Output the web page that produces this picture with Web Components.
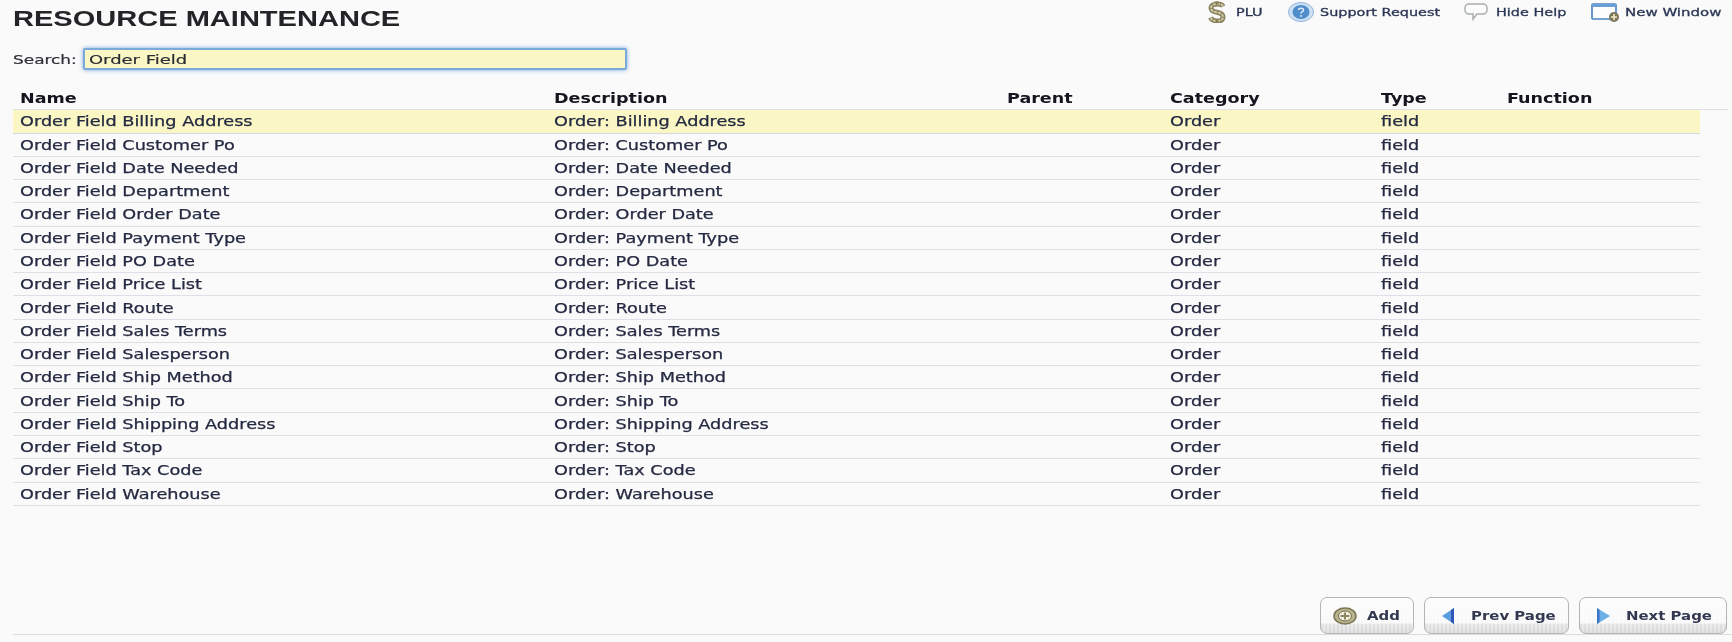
<!DOCTYPE html>
<html><head><meta charset="utf-8"><style>
html,body{margin:0;padding:0;background:#fafafa;}
body{width:1732px;height:642px;overflow:hidden;font-family:"DejaVu Sans",sans-serif;color:#2a2a3a;}
</style></head><body>
<rm-page></rm-page>
<script>
const S='M15 5.500C14 3 11.500 3 9 3S3 4 3 7s3 3.800 6 4.300 6 1.700 6 4.700-3 4-6 4-5.500-1-6.500-3.500';
const ICONS={
dollar:`<svg width="18" height="22" viewBox="0 0 18 22"><path d="${S}" fill="none" stroke="#8a8260" stroke-width="5"/><path d="${S}" fill="none" stroke="#cfc9a4" stroke-width="2" stroke-dasharray="3 1"/><path d="M9 .5v3M9 19v3" stroke="#857c58" stroke-width="3"/></svg>`,
help:`<svg width="26" height="22" viewBox="0 0 26 22"><ellipse cx="13" cy="11" rx="12.500" ry="9.500" fill="#cfe0f2" stroke="#8fb4dc"/><ellipse cx="13" cy="11" rx="8.500" ry="7" fill="#4f8dcb"/><path d="M10.500 9c0-2 5-2.500 5 0 0 1.800-2.500 1.500-2.500 3.500" fill="none" stroke="#dcebf8" stroke-width="1.600"/><circle cx="13" cy="15" r="1" fill="#dcebf8"/></svg>`,
bubble:`<svg width="24" height="20" viewBox="0 0 24 20"><path d="M5 2h14c2 0 4 1.500 4 4v2c0 2.500-2 4-4 4h-6l-4 5v-5H5c-2 0-4-1.500-4-4V6c0-2.500 2-4 4-4z" fill="#fcfcfc" stroke="#a8adb0" stroke-width="1.500"/></svg>`,
win:`<svg width="29" height="20" viewBox="0 0 29 20"><rect x="1" y="2" width="24" height="15" rx="1" fill="#fdfdfd" stroke="#4d86c4" stroke-width="1.700"/><rect x="1" y="2" width="24" height="3" fill="#6b9fd6"/><circle cx="23" cy="15" r="5" fill="#7d7658"/><path d="M23 12v6M20 15h6" stroke="#eee8c8" stroke-width="1.600"/></svg>`,
add:`<svg width="24" height="18" viewBox="0 0 24 18"><ellipse cx="12" cy="9" rx="11" ry="8" fill="#b9b48d" stroke="#7b7658" stroke-width="1.500"/><ellipse cx="12" cy="9" rx="6.500" ry="5" fill="#f4f1df" stroke="#6f6a4c"/><path d="M12 5.500v7M7.500 9h9" stroke="#8d8764" stroke-width="2"/></svg>`,
prev:`<svg width="12" height="16" viewBox="0 0 12 16"><path d="M12 0v16L0 8z" fill="#5a9de0"/><path d="M12 0v16l-3-2V2z" fill="#2f58b8"/></svg>`,
next:`<svg width="13" height="16" viewBox="0 0 13 16"><path d="M0 0v16l13-8z" fill="#6cb0ea"/><path d="M0 0v16l2.500-2V2z" fill="#3b73c8"/></svg>`
};
class Base extends HTMLElement{
  render(css,html){const r=this.shadowRoot||this.attachShadow({mode:'open'});r.innerHTML=`<style>${css}</style>${html}`;}
}
/* Text widened horizontally; the host reserves the widened width in the flow. */
class WideText extends Base{connectedCallback(){
  const s=parseFloat(this.getAttribute('s'))||1.33;
  this.render(`:host{display:inline-block;white-space:nowrap}span{display:inline-block;transform:scaleX(${s});transform-origin:left center}`,`<span><slot></slot></span>`);
  const w=this.shadowRoot.querySelector('span');
  this.style.width=(w.getBoundingClientRect().width)+'px';
}}
class ToolLink extends Base{connectedCallback(){
  this.render(`:host{display:flex;align-items:center;gap:var(--g,7px);margin-left:var(--m,0);font:11px "DejaVu Sans",sans-serif;-webkit-text-stroke:.3px #2a3654;color:#2a3654;white-space:nowrap}svg{display:block}`,
  `${ICONS[this.getAttribute('icon')]}<wide-text s="${this.getAttribute('s')||1.31}"><slot></slot></wide-text>`);
}}
class PageHeader extends Base{connectedCallback(){
  this.render(`:host{display:flex;justify-content:space-between;height:48px;padding:2px 11px 0 13px;box-sizing:border-box}
  h1{margin:7px 0 0;font:bold 22px "Liberation Sans",sans-serif;color:#232328;line-height:20px}
  nav{display:flex;height:20px;align-items:center}`,
  `<h1><wide-text s="1.32"><slot name="title"></slot></wide-text></h1><nav><slot></slot></nav>`);
}}
class SearchBar extends Base{connectedCallback(){
  this.render(`:host{display:flex;align-items:center;gap:6px;padding:0 0 0 13px;height:22px;font:13px "DejaVu Sans",sans-serif;color:#2c2d36;-webkit-text-stroke:.2px #2c2d36}
  .field{width:544px;height:22px;box-sizing:border-box;border:2px solid #7aa9da;box-shadow:0 0 4px #7aa9da;background:#faf7c4;padding:0 4px;display:flex;align-items:center;border-radius:2px}`,
  `<wide-text s="1.3">Search:</wide-text><div class="field" role="textbox"><wide-text s="1.38">${this.getAttribute('value')}</wide-text></div>`);
}}
const COLS='534px 453px 163px 211px 126px 1fr';
class DataRow extends Base{connectedCallback(){
  const cells=(this.getAttribute('cells')||'').split('|');
  const head=this.hasAttribute('head'),hi=this.hasAttribute('hi');
  this.render(`:host{display:grid;grid-template-columns:${COLS};align-items:center;height:23.270px;box-sizing:border-box;padding:${head?0:1}px 0 0 7px;
  width:${head?1715:1687}px;border-bottom:1px solid ${hi?'#d6d6de':'#dfdfe8'};
  background:${hi?'#faf7c4':'transparent'};font:${head?'bold 13.200px':'13.300px'} "DejaVu Sans",sans-serif;color:${head?'#15151f':'#252a42'};-webkit-text-stroke:${head?0:.25}px #252a42;white-space:nowrap}
  wide-text{justify-self:start}`,
  cells.map(c=>`<wide-text s="1.33">${c}</wide-text>`).join(''));
}}
class DataTable extends Base{connectedCallback(){
  this.render(`:host{display:block;margin:17px 0 0 13px}`,`<slot></slot>`);
  const names=['Billing Address','Customer Po','Date Needed','Department','Order Date','Payment Type','PO Date','Price List','Route','Sales Terms','Salesperson','Ship Method','Ship To','Shipping Address','Stop','Tax Code','Warehouse'];
  let h=`<data-row head cells="Name|Description|Parent|Category|Type|Function"></data-row>`;
  names.forEach((n,i)=>{h+=`<data-row ${i==0?'hi':''} cells="Order Field ${n}|Order: ${n}||Order|field|"></data-row>`});
  this.innerHTML=h;
}}
class ActionButton extends Base{connectedCallback(){
  this.render(`:host{display:flex;align-items:center;gap:var(--g,11px);height:37px;box-sizing:border-box;padding:0 0 0 var(--p,14px);width:var(--w,94px);border:1.500px solid #b4b4b4;border-radius:7px;background:repeating-linear-gradient(90deg,transparent 0 2px,#ffffff55 2px 4px),linear-gradient(#fcfcfc 0,#f8f8f8 72%,#e3e3e3 74%,#d6d6d6 100%);font:bold 11.400px "DejaVu Sans",sans-serif;color:#333850;white-space:nowrap}svg{display:block}`,
  `${ICONS[this.getAttribute('icon')]}<wide-text s="1.31"><slot></slot></wide-text>`);
}}
class RmPage extends Base{connectedCallback(){
  this.render(`:host{display:flex;flex-direction:column;height:642px;box-sizing:border-box;filter:blur(.45px)}
  .foot{margin-top:auto;display:flex;justify-content:flex-end;gap:10px;padding:0 5px 0 0;margin-left:13px;border-bottom:1px solid #dcdce2;margin-bottom:7px}`,
  `<page-header><span slot="title">RESOURCE MAINTENANCE</span>
    <tool-link icon="dollar" style="--g:10px">PLU</tool-link>
    <tool-link icon="help" style="--m:26px;--g:6px">Support Request</tool-link>
    <tool-link icon="bubble" style="--m:24px;--g:8px">Hide Help</tool-link>
    <tool-link icon="win" s="1.36" style="--m:24px;--g:5px">New Window</tool-link>
  </page-header>
  <search-bar value="Order Field"></search-bar>
  <data-table></data-table>
  <div class="foot">
    <action-button icon="add" style="--w:94px;--p:12px;--g:10px">Add</action-button>
    <action-button icon="prev" style="--w:145px;--p:17px;--g:17px">Prev Page</action-button>
    <action-button icon="next" style="--w:148px;--p:17px;--g:16px">Next Page</action-button>
  </div>`);
}}
customElements.define('wide-text',WideText);
customElements.define('tool-link',ToolLink);
customElements.define('page-header',PageHeader);
customElements.define('search-bar',SearchBar);
customElements.define('data-row',DataRow);
customElements.define('data-table',DataTable);
customElements.define('action-button',ActionButton);
customElements.define('rm-page',RmPage);
</script>
</body></html>
